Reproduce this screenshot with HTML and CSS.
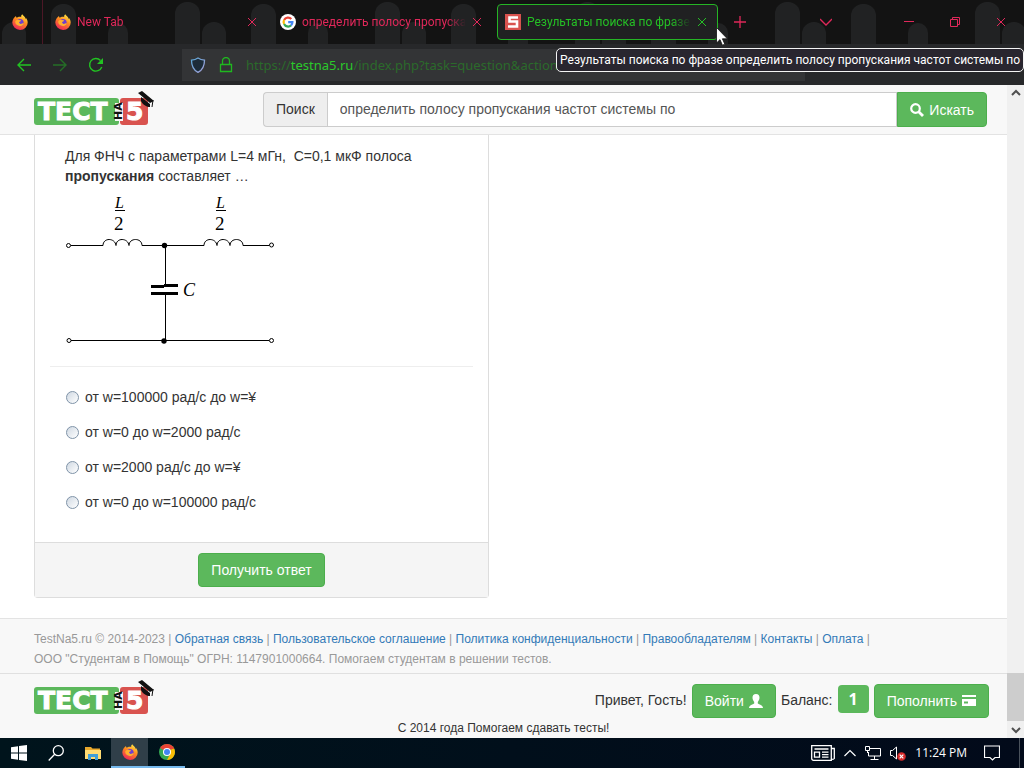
FILE: index.html
```html
<!DOCTYPE html>
<html lang="ru">
<head>
<meta charset="utf-8">
<title>Результаты поиска по фразе</title>
<link rel="stylesheet" href="styles.css">
</head>
<body>
<svg class="defs" aria-hidden="true">
  <defs>
    <linearGradient id="fire" x1="0.8" y1="0" x2="0.3" y2="1">
      <stop offset="0" stop-color="#fff04a"/><stop offset="0.45" stop-color="#ff8a1f"/><stop offset="1" stop-color="#f0245a"/>
    </linearGradient>
    <linearGradient id="shieldline" x1="0" y1="0" x2="1" y2="1">
      <stop offset="0" stop-color="#5aa8d8"/><stop offset="1" stop-color="#a8a0d8"/>
    </linearGradient>
  </defs>
  <symbol id="firefox" viewBox="0 0 16 16">
    <path fill="url(#fire)" d="M10.2 0.2c-.9.8-1.2 1.8-1 2.8C7 2.600 5.700 3.200 5 3.800 4.300 3.400 4 2.600 4 1.900 2 3.300.3 5.700.3 8.600a7.700 7.400 0 0 0 15.400-.2c0-1.900-.7-3.400-1.700-4.500v1.400C13.300 2.900 11.500 1.800 10.200.2z"/>
    <circle cx="8" cy="8.500" r="3.600" fill="#6f3fd0"/>
    <path fill="#ffb02e" d="M3.200 7.500c1-1.800 2.400-2 4-1.500.6.200 1.500.2 2 .2-.4 1.200-1.600 1.300-2 1.900-.4.700.3 1.700 1.400 1.800 1.300.1 2-.7 3.200-.5-1 2.300-2.700 2.900-4.300 2.600C5 11.600 3 10 3.200 7.500z"/>
  </symbol>
  <symbol id="close" viewBox="0 0 10 10"><path d="M1 1l8 8M9 1L1 9" fill="none" stroke="currentColor"/></symbol>
</svg>

<header class="browser">
  <svg class="theme" aria-hidden="true">
    <defs><pattern id="fingers" width="200" height="44" patternUnits="userSpaceOnUse">
      <g fill="#212223">
        <rect x="175" y="2" width="25" height="60" rx="12"/>
        <rect x="2" y="22" width="24" height="40" rx="12"/>
        <rect x="51" y="4" width="25" height="60" rx="12"/>
        <rect x="108" y="23" width="20" height="40" rx="10"/>
      </g>
    </pattern></defs>
    <rect width="100%" height="44" fill="url(#fingers)"/>
  </svg>
  <div class="tabs">
    <button class="pinned" aria-label="Firefox"><svg class="i16"><use href="#firefox"/></svg></button>
    <div class="tab"><svg class="i16"><use href="#firefox"/></svg><span class="tab-title">New Tab</span><button class="x" aria-label="Close tab"><svg class="i10"><use href="#close"/></svg></button></div>
    <div class="tab">
      <svg class="i16" viewBox="0 0 16 16"><circle cx="8" cy="8" r="8" fill="#fff"/><g fill="none" stroke-width="2.200"><path stroke="#ea4335" d="M4.100 6A4.400 4.400 0 0 1 11.300 5"/><path stroke="#fbbc05" d="M4.100 6a4.400 4.400 0 0 0 0 4"/><path stroke="#34a853" d="M4.100 10a4.400 4.400 0 0 0 6.900 1.400"/><path stroke="#4285f4" d="M11 11.400A4.400 4.400 0 0 0 12.400 8.200H8.200"/></g></svg>
      <span class="tab-title">определить полосу пропускания</span><button class="x" aria-label="Close tab"><svg class="i10"><use href="#close"/></svg></button></div>
    <div class="tab active">
      <svg class="i16" viewBox="0 0 16 16"><rect width="16" height="16" fill="#d9534f"/><path d="M13 3.500H4.500v4H12v5H3" fill="none" stroke="#fff" stroke-width="2.600"/></svg>
      <span class="tab-title">Результаты поиска по фразе</span><button class="x" aria-label="Close tab"><svg class="i10"><use href="#close"/></svg></button></div>
    <button class="plus" aria-label="New tab"><svg class="i12" viewBox="0 0 12 12"><path d="M6 0v12M0 6h12" fill="none" stroke="currentColor" stroke-width="1.300"/></svg></button>
    <div class="window-buttons">
      <button class="list" aria-label="List tabs"><svg class="i12" viewBox="0 0 12 12"><path d="M0 3l6 6 6-6" fill="none" stroke="currentColor" stroke-width="1.300"/></svg></button>
      <button aria-label="Minimize"><svg class="i10" viewBox="0 0 10 10"><path d="M0 4.500h10" stroke="currentColor"/></svg></button>
      <button aria-label="Restore"><svg class="i10" viewBox="0 0 10 10"><path d="M.5 2.500h7v7h-7zM2.500 2.500v-2h7v7h-2" fill="none" stroke="currentColor"/></svg></button>
      <button aria-label="Close"><svg class="i10"><use href="#close"/></svg></button>
    </div>
  </div>
  <div class="nav">
    <button aria-label="Back"><svg class="i16" viewBox="0 0 16 16"><path d="M15 8H2M8 2L2 8l6 6" fill="none" stroke="currentColor" stroke-width="1.400"/></svg></button>
    <button class="dim" aria-label="Forward"><svg class="i16" viewBox="0 0 16 16"><path d="M1 8h13M8 2l6 6-6 6" fill="none" stroke="currentColor" stroke-width="1.400"/></svg></button>
    <button aria-label="Reload"><svg class="i16" viewBox="0 0 16 16"><path d="M13.800 10A6.300 6.300 0 1 1 12.500 3.500" fill="none" stroke="currentColor" stroke-width="1.400"/><path d="M15 1v6H9z" fill="currentColor"/></svg></button>
    <div class="urlbar">
      <svg class="i16" viewBox="0 0 16 16"><path d="M8 1C6 2.400 4 3 1.500 3.200 1.500 9 3.500 13 8 15.400 12.500 13 14.500 9 14.500 3.200 12 3 10 2.400 8 1z" fill="#1c2b38" stroke="url(#shieldline)" stroke-width="1.300"/></svg>
      <svg class="i16" viewBox="0 0 16 16"><path d="M4.500 7V4a3.500 3.500 0 0 1 7 0v3M2.500 7.500h11v7h-11z" fill="none" stroke="#1fb81f" stroke-width="1.300"/></svg>
      <div class="url" role="textbox" aria-label="Address">https://<span class="host">testna5.ru</span>/index.php?task=question&amp;action=</div>
      <svg class="i16" viewBox="0 0 16 16"><path d="M1 2h14v11H1z" fill="none" stroke="#1fb81f" stroke-width="2"/></svg>
      <svg class="i16" viewBox="0 0 16 16"><path d="M8 1l2 5h5l-4 3 2 5-5-3-5 3 2-5-4-3h5z" fill="none" stroke="#1fb81f"/></svg>
    </div>
    <div class="extensions">
      <svg class="i16" viewBox="0 0 16 16"><path d="M2 2h12v11H2z" fill="none" stroke="#1fb81f" stroke-width="2"/></svg>
      <svg class="i16" viewBox="0 0 16 16"><path d="M2 2h12v12H2z" fill="none" stroke="#1fb81f" stroke-width="2"/></svg>
    </div>
  </div>
  <div class="tooltip" role="tooltip">Результаты поиска по фразе определить полосу пропускания частот системы по</div>
  <svg class="cursor" viewBox="0 0 12 19"><path d="M.5.5v15.500l3.500-3.400 2.400 5.600 2.400-1-2.400-5.400h5z" fill="#fff" stroke="#111" stroke-width="0.800"/></svg>
</header>

<div class="viewport">
  <div class="page">
    <div class="topbar">
      <a href="#" aria-label="Тест на 5">
        <svg class="logo" viewBox="0 0 122 39">
          <rect y="8" width="85" height="27" rx="3" fill="#5cb85c"/>
          <rect x="86" y="8" width="28" height="27" rx="3" fill="#d9534f"/>
          <text x="4" y="30" class="logo-word">ТЕСТ</text>
          <text x="92" y="30" class="logo-word">5</text>
          <rect x="81" y="13" width="8" height="18" fill="#f8f8f8"/>
          <text transform="translate(88 30) rotate(-90)" class="logo-na">НА</text>
          <path d="M104 3l4-2 12 10-4 2zM107 7l9 7v3c-3 0-7-2-9-6z" fill="#111"/>
          <path d="M119 10l-1 7" stroke="#111" fill="none"/>
        </svg>
      </a>
      <form class="search">
        <label for="q">Поиск</label>
        <input id="q" type="text" value="определить полосу пропускания частот системы по">
        <button type="button" class="btn"><svg class="i14" viewBox="0 0 14 14"><circle cx="5.500" cy="5.500" r="4.300" fill="none" stroke="#fff" stroke-width="2.200"/><path d="M8.700 8.700l4.300 4.300" stroke="#fff" stroke-width="2.800"/></svg>Искать</button>
      </form>
    </div>
    <main>
      <form class="panel">
        <div class="panel-body">
          <p class="question">Для ФНЧ с параметрами L=4 мГн,&nbsp; С=0,1 мкФ полоса <b>пропускания</b> составляет …</p>
          <svg class="circuit" viewBox="15 1 210 160">
            <g fill="none" stroke="#000">
              <path d="M21 60.500H53c0-8 12-8 13 0 0-8 12-8 13 0 0-8 13-8 13 0H154c0-8 12-8 13 0 0-8 12-8 13 0 0-8 13-8 13 0H219M115.500 60V101M115.500 108V156M21 155.500H219M65 25.500h10M166 25.500h10"/>
              <path d="M101 101.500h13M114 100.500h14M101 108.500h27" stroke-width="3"/>
              <circle cx="18.500" cy="60.500" r="2"/><circle cx="221.500" cy="60" r="2"/><circle cx="19" cy="155.500" r="2"/><circle cx="221.500" cy="155.500" r="2"/>
            </g>
            <circle cx="114.500" cy="60.500" r="2.700"/><circle cx="114" cy="156" r="2.700"/>
            <text x="65" y="23" class="var small">L</text><text x="166" y="23" class="var small">L</text>
            <text x="64" y="45" class="num">2</text><text x="165" y="45" class="num">2</text>
            <text x="133" y="111" class="var">C</text>
          </svg>
          <hr>
          <div class="options">
            <label><input type="radio" name="answer">от w=100000 рад/с до w=¥</label>
            <label><input type="radio" name="answer">от w=0 до w=2000 рад/с</label>
            <label><input type="radio" name="answer">от w=2000 рад/с до w=¥</label>
            <label><input type="radio" name="answer">от w=0 до w=100000 рад/с</label>
          </div>
        </div>
        <div class="panel-footer"><button type="button" class="btn">Получить ответ</button></div>
      </form>
    </main>
    <footer class="links">
      <div>TestNa5.ru © 2014-2023 | <a href="#">Обратная связь</a> | <a href="#">Пользовательское соглашение</a> | <a href="#">Политика конфиденциальности</a> | <a href="#">Правообладателям</a> | <a href="#">Контакты</a> | <a href="#">Оплата</a> |</div>
      <div>ООО "Студентам в Помощь" ОГРН: 1147901000664. Помогаем студентам в решении тестов.</div>
    </footer>
    <div class="account">
      <div class="account-row">
        <a href="#" aria-label="Тест на 5">
          <svg class="logo" viewBox="0 0 122 39">
            <rect y="8" width="85" height="27" rx="3" fill="#5cb85c"/>
            <rect x="86" y="8" width="28" height="27" rx="3" fill="#d9534f"/>
            <text x="4" y="30" class="logo-word">ТЕСТ</text>
            <text x="92" y="30" class="logo-word">5</text>
            <rect x="81" y="13" width="8" height="18" fill="#f8f8f8"/>
            <text transform="translate(88 30) rotate(-90)" class="logo-na">НА</text>
            <path d="M104 3l4-2 12 10-4 2zM107 7l9 7v3c-3 0-7-2-9-6z" fill="#111"/>
            <path d="M119 10l-1 7" stroke="#111" fill="none"/>
          </svg>
        </a>
        <div class="account-items">
          <span class="caption">Привет, Гость!</span>
          <button type="button" class="btn">Войти<svg class="i14" viewBox="0 0 14 14"><path d="M7 0c2.500 0 3.500 1.600 3.500 3.600C10.500 5.600 9.600 7 8.800 8v1.500c1 1 5.200 1.500 5.200 4.500H0c0-3 4.200-3.500 5.200-4.500V8C4.400 7 3.500 5.600 3.500 3.600 3.500 1.600 4.500 0 7 0z" fill="#fff"/></svg></button>
          <span class="caption">Баланс:</span>
          <span class="badge">1</span>
          <button type="button" class="btn">Пополнить<svg class="i14" viewBox="0 0 14 14"><path d="M0 1h14v2H0zM0 5h14v7H0z" fill="#fff"/><path d="M2 7.500h4v2H2z" fill="#5cb85c"/></svg></button>
        </div>
      </div>
      <div class="motto">С 2014 года Помогаем сдавать тесты!</div>
    </div>
  </div>
  <div class="scrollbar" aria-hidden="true">
    <svg class="i10" viewBox="0 0 10 10"><path d="M1 7l4-4 4 4" fill="none" stroke="#505050" stroke-width="2"/></svg>
    <div class="thumb"></div>
    <svg class="i10" viewBox="0 0 10 10"><path d="M1 3l4 4 4-4" fill="none" stroke="#505050" stroke-width="2"/></svg>
  </div>
</div>

<footer class="taskbar">
  <button aria-label="Start"><svg class="i16" viewBox="0 0 16 16"><path d="M0 2.200L7 1.200v6.300H0zM8 1.100L16 0v7.500H8zM0 8.500h7v6.300l-7-1zM8 8.500h8V16l-8-1.100z" fill="#fff"/></svg></button>
  <button aria-label="Search"><svg class="i16" viewBox="0 0 16 16"><circle cx="10.300" cy="5.700" r="5" fill="none" stroke="#fff" stroke-width="1.300"/><path d="M6.700 9.300L.7 15.500" stroke="#fff" stroke-width="1.300"/></svg></button>
  <button aria-label="Explorer"><svg class="i16" viewBox="0 0 16 16"><path d="M0 2h6l1.500 1.500H15V14H0z" fill="#e8a92d"/><path d="M0 5h16v9H0z" fill="#ffdc72"/><path d="M3 15V9h10v6h-3v-3H6v3z" fill="#3f9fd8"/></svg></button>
  <button class="current" aria-label="Firefox"><svg class="i16"><use href="#firefox"/></svg></button>
  <button class="open" aria-label="Chrome"><svg class="i16" viewBox="0 0 16 16"><circle cx="8" cy="8" r="8" fill="#34a853"/><path d="M8 8L1.100 4A8 8 0 0 1 14.900 4z" fill="#ea4335"/><path d="M8 8L14.900 4A8 8 0 0 1 8 16l3-6z" fill="#fbbc05"/><path d="M8 4.300h7" stroke="#ea4335"/><circle cx="8" cy="8" r="4" fill="#fff"/><circle cx="8" cy="8" r="3" fill="#4285f4"/></svg></button>
  <div class="tray">
    <svg class="news" viewBox="0 0 24 16"><path d="M.7.700h19.600v14.600H2.500A1.800 1.800 0 0 1 .7 13.500zM20.300 3.500h3v10a1.800 1.800 0 0 1-3 0M3.500 4h14M3.500 7.200h5v5h-5zM11 7.200h6.500M11 9.700h6.500M11 12.200h6.500" fill="none" stroke="#fff" stroke-width="1.300"/></svg>
    <svg class="i12" viewBox="0 0 12 12"><path d="M.5 9L6 3.500 11.500 9" fill="none" stroke="#fff" stroke-width="1.200"/></svg>
    <svg class="i16" viewBox="0 0 16 16"><path d="M5 3.500h10.500v7.500H3.500V7M9.500 11v3M5.500 14.500h8M.5 1.500h4v4h-4zM2.500 5.500V8" fill="none" stroke="#fff"/></svg>
    <svg class="i16" viewBox="0 0 16 16"><path d="M.5 5.500h2L6.500 2v12L2.500 10.500h-2z" fill="none" stroke="#fff"/><circle cx="11.500" cy="11.500" r="4.300" fill="#d62b2b"/><path d="M9.700 9.700l3.600 3.600M13.300 9.700l-3.600 3.600" stroke="#fff" stroke-width="1.200"/></svg>
    <time>11:24 PM</time>
    <svg class="i16" viewBox="0 0 16 16"><path d="M.5 1h15v11.500H11L8.500 15 6 12.500H.5z" fill="none" stroke="#fff" stroke-width="1.200"/></svg>
    <span class="desktop-edge"></span>
  </div>
</footer>
</body>
</html>
```
FILE: styles.css
```css
* { box-sizing: border-box; }
body {
  margin: 0;
  min-height: 100vh;
  display: flex;
  flex-direction: column;
  background: #fff;
  color: #333;
  font: 14px/20px "Liberation Sans", Arial, sans-serif;
}
button { font: inherit; color: inherit; border: 0; padding: 0; background: none; }
svg { display: block; flex: none; }
p, form { margin: 0; }
a { color: #337ab7; text-decoration: none; }
.defs { position: absolute; width: 0; height: 0; }
.i10 { width: 10px; height: 10px; }
.i12 { width: 12px; height: 12px; }
.i14 { width: 14px; height: 14px; }
.i16 { width: 16px; height: 16px; }

.browser {
  position: relative;
  background: #131313;
  color: #e0285a;
  font: 12px/18px Roboto, "Noto Sans", sans-serif;
}
.theme { position: absolute; top: 0; left: 0; width: 100%; height: 44px; }
.tabs { position: relative; display: flex; align-items: center; height: 44px; }
.pinned {
  display: flex;
  align-items: center;
  justify-content: center;
  width: 43px;
  height: 44px;
  padding-right: 3px;
  border-right: 1px solid #4c1726;
}
.tab {
  display: flex;
  align-items: center;
  gap: 6px;
  flex: 0 1 225px;
  min-width: 0;
  height: 36px;
  padding: 0 11px 0 12px;
}
.tab-title {
  flex: 1;
  overflow: hidden;
  white-space: nowrap;
  mask-image: linear-gradient(90deg, #000 88%, transparent);
}
.tab.active {
  flex-basis: 221px;
  margin-left: 4px;
  padding: 0 10px 0 7px;
  color: #25c025;
  border: 1px solid #25b525;
  border-radius: 4px;
  background: #202122;
}
.plus { margin-left: 16px; }
.window-buttons { display: flex; align-items: center; gap: 36px; margin-left: auto; padding-right: 18px; }
.window-buttons .list { margin-right: 36px; }
.nav {
  display: flex;
  align-items: center;
  gap: 20px;
  height: 41px;
  padding-left: 16px;
  background: #27282a;
  color: #22c322;
}
.nav .dim { opacity: 0.45; }
.urlbar {
  display: flex;
  align-items: center;
  gap: 12px;
  flex: 0 1 623px;
  min-width: 0;
  height: 32px;
  margin-left: 58px;
  padding: 0 8px;
  background: #333436;
}
.url {
  flex: 1;
  overflow: hidden;
  white-space: nowrap;
  color: #2b6a2b;
  font: 13px/20px "Noto Sans", sans-serif;
}
.host { color: #2bc92b; }
.extensions { display: flex; gap: 20px; margin-left: auto; padding-right: 51px; }
.tooltip {
  position: absolute;
  top: 48px;
  right: 0;
  padding: 2px 3px;
  border: 1px solid #f4f4f4;
  border-radius: 5px;
  background: #29262f;
  color: #fff;
  white-space: nowrap;
}
.cursor { position: absolute; left: 716px; top: 27px; width: 12px; height: 19px; }

.viewport { flex: 1; display: flex; }
.page { flex: 1; min-width: 0; display: flex; flex-direction: column; }
.topbar {
  display: flex;
  align-items: center;
  justify-content: space-between;
  padding: 5px 20px 5px 34px;
  border-bottom: 1px solid #e3e3e3;
  background: #f8f8f8;
}
.logo { width: 122px; height: 39px; }
.logo-word { font: bold 25px "DejaVu Sans", sans-serif; fill: #fff; stroke: #fff; stroke-width: 1px; }
.logo-na { font: bold 11px "DejaVu Sans", sans-serif; fill: #111; }
.search { display: flex; flex: 0 1 724px; height: 35px; }
.search label {
  padding: 6px 12px;
  border: 1px solid #ccc;
  border-right: 0;
  border-radius: 4px 0 0 4px;
  background: #eee;
}
.search input {
  flex: 1;
  min-width: 0;
  padding: 0 12px 2px;
  border: 1px solid #ccc;
  background: #fff;
  color: #555;
  font: inherit;
}
.btn {
  display: inline-flex;
  align-items: center;
  gap: 5px;
  height: 34px;
  padding: 0 12px;
  border: 1px solid #4cae4c;
  border-radius: 4px;
  background: #5cb85c;
  color: #fff;
}
.search .btn { height: 35px; border-radius: 0 4px 4px 0; }

main { flex: 1; padding: 0 34px 19px; background: #fff; }
.panel {
  max-width: 455px;
  border: 1px solid #ddd;
  border-top: 0;
  border-radius: 0 0 4px 4px;
}
.panel-body { padding: 11px 15px 20px; }
.question { padding: 0 15px; }
.circuit { width: 210px; height: 160px; margin-left: 15px; }
.var { font: italic 18px "Liberation Serif", serif; }
.small { font-size: 16px; }
.num { font: 19px "Liberation Serif", serif; }
hr { height: 1px; margin: 20px 0; border: 0; background: #eee; }
.options { display: grid; gap: 15px; padding-left: 15px; }
.options label { display: flex; align-items: center; gap: 6px; }
.options input {
  appearance: none;
  width: 13px;
  height: 13px;
  margin: 0 0 0 1px;
  border: 1px solid #7f93a8;
  border-radius: 50%;
  background: linear-gradient(135deg, #cfd8e2, #fff);
}
.panel-body .options { padding-bottom: 10px; }
.panel-footer {
  display: flex;
  justify-content: center;
  padding: 10px 15px;
  border-top: 1px solid #ddd;
  background: #f5f5f5;
}
.links {
  padding: 10px 34px 4px;
  border-top: 1px solid #e3e3e3;
  background: #f8f8f8;
  color: #999;
  font-size: 12px;
}
.account { border-top: 1px solid #e0e0e0; background: #f8f8f8; }
.account-row { display: flex; justify-content: space-between; padding: 5px 18px 0 34px; }
.account-items { display: flex; align-items: flex-start; gap: 5px; padding-top: 5px; }
.caption { line-height: 32px; }
.badge {
  margin-top: 1px;
  padding: 4px 11px;
  border-radius: 4px;
  background: #5cb85c;
  color: #fff;
  font: bold 16px/20px "Open Sans", sans-serif;
}
.motto { text-align: center; font-size: 12px; }
.scrollbar {
  display: flex;
  flex-direction: column;
  align-items: center;
  width: 17px;
  padding: 3px 0;
  background: #f0f0f0;
}
.thumb { width: 100%; height: 48px; margin: auto 0 4px; background: #cdcdcd; }

.taskbar {
  display: flex;
  height: 30px;
  background: linear-gradient(90deg, #00141c, #020a1a);
  color: #fff;
  font: 12px/16px "Open Sans", sans-serif;
}
.taskbar button { display: flex; align-items: center; justify-content: center; width: 37px; }
.taskbar .current { background: #303f49; border-bottom: 2px solid #76b9ed; }
.taskbar .open { border-bottom: 2px solid #76b9ed; }
.tray { display: flex; align-items: center; gap: 9px; margin-left: auto; padding-right: 4px; }
.news { width: 24px; height: 16px; }
.tray time { padding-right: 8px; }
.desktop-edge { align-self: stretch; width: 1px; margin-left: 10px; background: #4a525c; }
```
